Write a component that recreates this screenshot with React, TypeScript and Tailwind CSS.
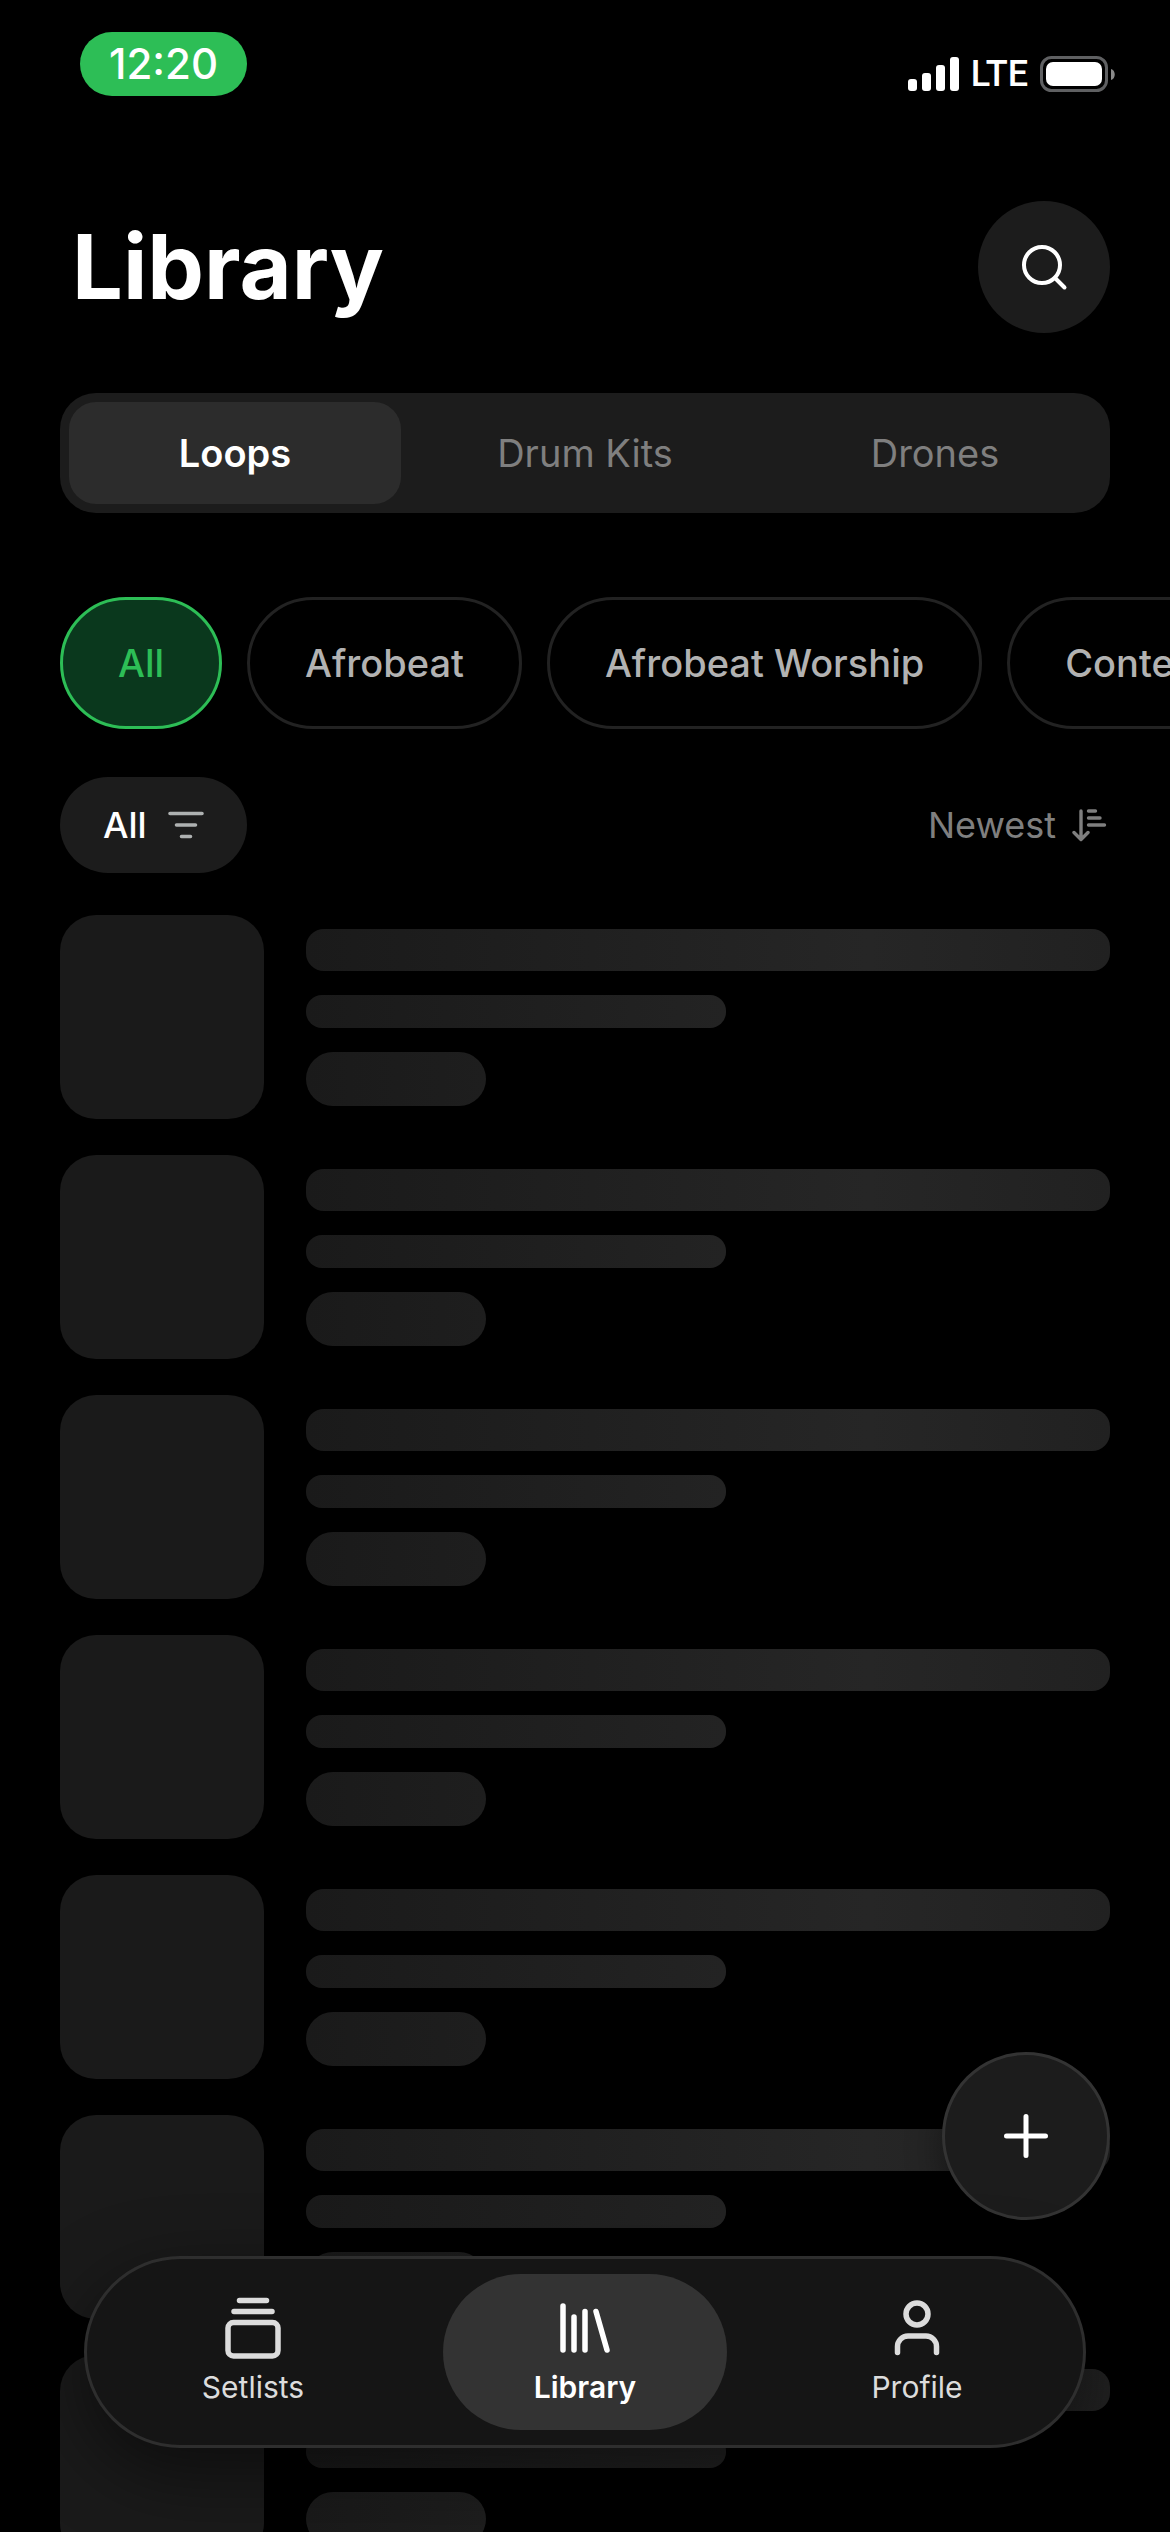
import { useState } from "react"

const kinds = ["Loops", "Drum Kits", "Drones"]
const genres = ["All", "Afrobeat", "Afrobeat Worship", "Contemporary"]

function StatusBar() {
	return (
		<div className="flex items-start justify-between pt-8 pl-20 pr-[54px]">
			<div className="flex h-16 w-[167px] items-center justify-center rounded-full bg-[#2dbe56] text-[42px] leading-none font-medium">12:20</div>
			<div className="mt-6 flex h-9 items-center gap-3">
				<svg width="51" height="34" viewBox="0 0 51 34" fill="#fff" aria-hidden="true">
					<rect x="0" y="22" width="9" height="12" rx="3" />
					<rect x="14" y="16" width="9" height="18" rx="3" />
					<rect x="28" y="8" width="9" height="26" rx="3" />
					<rect x="42" y="0" width="9" height="34" rx="3" />
				</svg>
				<span className="font-['Roboto',sans-serif] text-[36px] leading-9 font-medium">LTE</span>
				<svg width="76" height="36" viewBox="0 0 76 36" aria-hidden="true">
					<rect x="1.5" y="1.5" width="65" height="33" rx="10" fill="none" stroke="#5f6062" strokeWidth="3" />
					<rect x="6" y="6" width="56" height="24" rx="7" fill="#fff" />
					<path d="M71 13c5 1 5 10 0 11z" fill="#8a8a8a" />
				</svg>
			</div>
		</div>
	)
}

function SkeletonRow() {
	return (
		<li className="flex items-center gap-[42px]">
			<div className="size-[204px] shrink-0 rounded-[36px] bg-[#1a1a1a]" />
			<div className="flex flex-1 flex-col gap-6">
				<div className="h-[42px] rounded-[18px] bg-linear-to-r from-[#1a1a1a] via-[#262626] via-70% to-[#212121]" />
				<div className="h-[33px] w-[420px] rounded-[16px] bg-linear-to-r from-[#1a1a1a] to-[#232323]" />
				<div className="h-[54px] w-[180px] rounded-full bg-linear-to-r from-[#1a1a1a] to-[#1e1e1e]" />
			</div>
		</li>
	)
}

const tabs = [
	{
		name: "Setlists",
		icon: (
			<>
				<path d="M25.500 11.500h27M20 22.500h38" />
				<rect x="14" y="33.5" width="50" height="33.5" rx="5.5" />
			</>
		),
	},
	{
		name: "Library",
		icon: <path d="M17 17v44M28 28v33M39 22.500v38.500M50 22.500l11 38.500" />,
	},
	{
		name: "Profile",
		icon: (
			<>
				<circle cx="39" cy="25" r="11" />
				<path d="M19.500 63.500v-6a10.500 10.500 0 0 1 10.500-10.500h18a10.500 10.500 0 0 1 10.500 10.500v6" />
			</>
		),
	},
]

export default function App() {
	const [kind, setKind] = useState("Loops")
	const [genre, setGenre] = useState("All")
	const [tab, setTab] = useState("Library")

	return (
		<div className="relative flex h-screen flex-col overflow-hidden bg-black font-['Inter',sans-serif] text-white">
			<StatusBar />

			<header className="mt-[105px] flex items-center justify-between px-[60px]">
				<h1 className="pl-3 text-[90px] leading-[132px] font-bold">Library</h1>
				<button aria-label="Search" className="flex size-[132px] items-center justify-center rounded-full bg-[#1c1c1c]">
					<svg width="48" height="48" viewBox="0 0 48 48" fill="none" stroke="#fff" strokeWidth="4" strokeLinecap="round" aria-hidden="true">
						<circle cx="22" cy="22" r="18" />
						<path d="M35 35l9.500 9.500" />
					</svg>
				</button>
			</header>

			<div className="mx-[60px] mt-[60px] grid grid-cols-3 gap-[18px] rounded-[36px] bg-[#1c1c1c] p-[9px]">
				{kinds.map((k) => (
					<button
						key={k}
						onClick={() => setKind(k)}
						className={`h-[102px] rounded-[27px] text-[38px] leading-none ${k === kind ? "bg-[#2c2c2c] font-semibold" : "text-[#7f7f7f]"}`}
					>
						{k}
					</button>
				))}
			</div>

			<div className="mt-[84px] flex shrink-0 gap-[25px] overflow-hidden pl-[60px]">
				{genres.map((g) => (
					<button
						key={g}
						onClick={() => setGenre(g)}
						className={`h-[132px] shrink-0 rounded-full border-3 px-[55px] text-[38px] leading-none font-medium ${g === genre ? "border-[#2dbe56] bg-[#0a381d] text-[#2dbe56]" : "border-[#222222] text-[#b2b2b2]"}`}
					>
						{g}
					</button>
				))}
			</div>

			<div className="mt-12 flex items-center justify-between px-[60px]">
				<button className="flex h-24 items-center gap-[21px] rounded-full bg-[#1c1c1c] px-[43px] text-[36px] leading-none font-medium">
					All
					<svg width="36" height="30" viewBox="0 0 36 30" stroke="#aeb1b1" strokeWidth="3.6" strokeLinecap="round" aria-hidden="true">
						<path d="M2 3.500h32M8.500 15h19M13.500 26.500h9" />
					</svg>
				</button>
				<button className="flex h-24 items-center gap-4 pr-[3px] text-[36px] leading-none text-[#7f7f7f]">
					Newest
					<svg width="35" height="34" viewBox="0 0 35 34" fill="none" stroke="currentColor" strokeWidth="3.4" strokeLinecap="round" strokeLinejoin="round" aria-hidden="true">
						<path d="M9 3v28M2 24.500l7 7l7-7M16.500 3h7M16.500 10h11.500M16.500 17h16" />
					</svg>
				</button>
			</div>

			<ul aria-label="Loading loops" className="mt-[42px] flex flex-col gap-9 px-[60px]">
				{[0, 1, 2, 3, 4, 5, 6].map((i) => (
					<SkeletonRow key={i} />
				))}
			</ul>

			<button
				aria-label="Add"
				className="absolute right-[60px] bottom-[312px] flex size-[168px] items-center justify-center rounded-full border-3 border-[#333333] bg-[#1c1c1c] shadow-[0_12px_36px_rgba(0,0,0,0.4)]"
			>
				<svg width="44" height="44" viewBox="0 0 44 44" stroke="#fff" strokeWidth="5" strokeLinecap="round" aria-hidden="true">
					<path d="M22 2.500v39M2.500 22h39" />
				</svg>
			</button>

			<nav className="absolute inset-x-[84px] bottom-[84px] grid grid-cols-3 rounded-full border-3 border-[#2e2e2e] bg-[#151515] py-[15px] shadow-[0_24px_72px_rgba(0,0,0,0.5)]">
				{tabs.map((t) => (
					<button
						key={t.name}
						onClick={() => setTab(t.name)}
						className={`mx-6 flex h-[156px] flex-col items-center rounded-full pt-[15px] text-[30px] leading-9 ${t.name === tab ? "bg-[#333333] font-semibold text-white" : "text-[#dcdcdc]"}`}
					>
						<svg width="78" height="80" viewBox="0 0 78 80" fill="none" stroke="currentColor" strokeWidth="5.5" strokeLinecap="round" strokeLinejoin="round" aria-hidden="true">
							{t.icon}
						</svg>
						{t.name}
					</button>
				))}
			</nav>
		</div>
	)
}
